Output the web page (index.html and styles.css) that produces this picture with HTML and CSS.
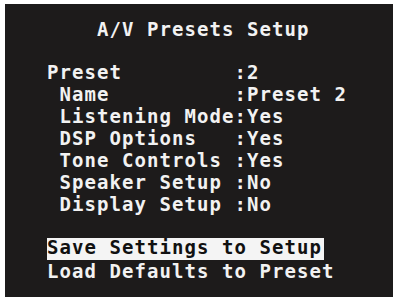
FILE: index.html
```html
<!DOCTYPE html>
<html>
<head>
<meta charset="utf-8">
<link rel="stylesheet" href="styles.css">
</head>
<body>
<div class="screen">
  <div class="title">A/V Presets Setup</div>
  <div class="rows">
    <div class="row"><span class="label">Preset</span><span class="colon">:</span><span class="value">2</span></div>
    <div class="row sub"><span class="label">Name</span><span class="colon">:</span><span class="value">Preset 2</span></div>
    <div class="row sub"><span class="label">Listening Mode</span><span class="colon">:</span><span class="value">Yes</span></div>
    <div class="row sub"><span class="label">DSP Options</span><span class="colon">:</span><span class="value">Yes</span></div>
    <div class="row sub"><span class="label">Tone Controls</span><span class="colon">:</span><span class="value">Yes</span></div>
    <div class="row sub"><span class="label">Speaker Setup</span><span class="colon">:</span><span class="value">No</span></div>
    <div class="row sub"><span class="label">Display Setup</span><span class="colon">:</span><span class="value">No</span></div>
  </div>
  <div class="actions">
    <div class="action selected">Save Settings to Setup</div>
    <div class="action">Load Defaults to Preset</div>
  </div>
</div>
</body>
</html>
```
FILE: styles.css
```css
html, body {
  margin: 0;
  padding: 0;
  background: #ffffff;
}
.screen {
  margin: 4px 5px 1px 5px;
  height: 293px;
  box-sizing: border-box;
  background: #1d1b1b;
  color: #f2f2f2;
  font-family: "DejaVu Sans Mono", monospace;
  font-weight: bold;
  font-size: 19px;
  letter-spacing: 1.06px;
  line-height: 22px;
  padding: 14px 0 0 42px;
  white-space: nowrap;
}
.title {
  padding-left: 50px;
}
.rows {
  margin-top: 21px;
  display: flex;
  flex-direction: column;
}
.row {
  display: grid;
  grid-template-columns: 187.5px 12.5px auto;
}
.row.sub .label {
  padding-left: 12.5px;
}
.colon {
  text-align: center;
}
.actions {
  margin-top: 23px;
  display: flex;
  flex-direction: column;
  align-items: flex-start;
}
.action.selected {
  background: #f4f4f4;
  color: #111111;
  line-height: 18px;
  padding: 0 2px 4px 0;
}
```
